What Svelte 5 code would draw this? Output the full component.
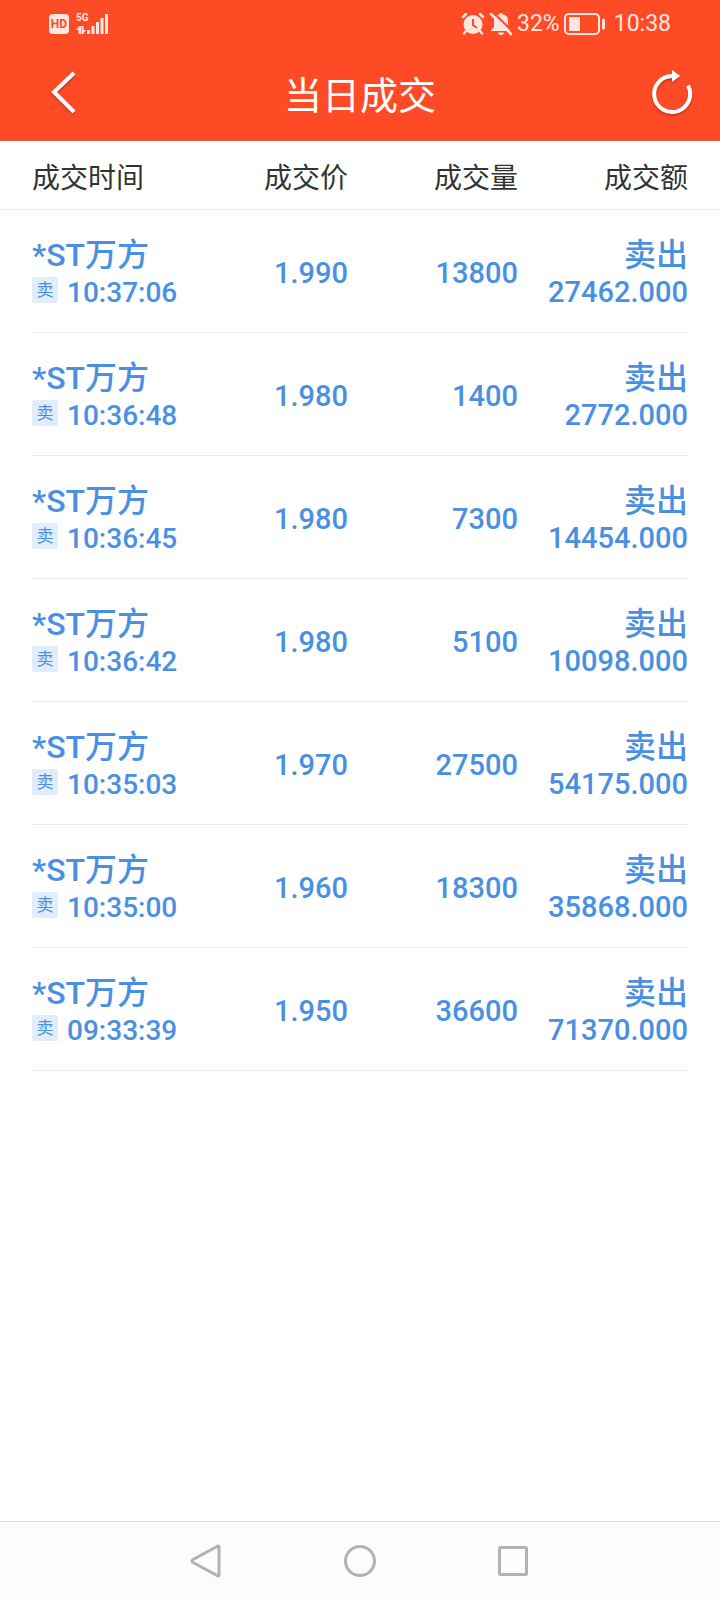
<script>
  const trades = [
    { time: '10:37:06', price: '1.990', volume: '13800', amount: '27462.000' },
    { time: '10:36:48', price: '1.980', volume: '1400', amount: '2772.000' },
    { time: '10:36:45', price: '1.980', volume: '7300', amount: '14454.000' },
    { time: '10:36:42', price: '1.980', volume: '5100', amount: '10098.000' },
    { time: '10:35:03', price: '1.970', volume: '27500', amount: '54175.000' },
    { time: '10:35:00', price: '1.960', volume: '18300', amount: '35868.000' },
    { time: '09:33:39', price: '1.950', volume: '36600', amount: '71370.000' },
  ];
  const columns = ['成交时间', '成交价', '成交量', '成交额'];
</script>

<div class="page">
  <header>
    <div class="status">
      <div class="status-left">
        <span class="hd">HD</span>
        <div class="network">
          <span>5G</span>
          <svg width="34" height="22" viewBox="0 0 34 22" fill="currentColor" aria-hidden="true">
            <path d="M0 17l3.500-4H5v8H2.500v-4zM5.500 13H7.500v4H10l-3 4H5.500z" />
            <rect x="11" y="17" width="3" height="4" />
            <rect x="15.500" y="13" width="3" height="8" />
            <rect x="20" y="9" width="3" height="12" />
            <rect x="24.500" y="5" width="3" height="16" />
            <rect x="29" y="1" width="3" height="20" />
          </svg>
        </div>
      </div>
      <div class="status-right">
        <svg width="24" height="24" viewBox="0 0 24 24" fill="none" stroke="currentColor" aria-hidden="true">
          <circle cx="12" cy="12.500" r="9.500" fill="currentColor" stroke="none" />
          <path d="M2 5l3-3M22 5l-3-3M5 19l-2 2.500M19 19l2 2.500" stroke-width="2.500" stroke-linecap="round" />
          <path d="M12 7v6l4 3" class="cut" stroke-width="2" />
        </svg>
        <svg width="24" height="24" viewBox="0 0 24 24" fill="none" stroke="currentColor" aria-hidden="true">
          <path d="M12 1c-1 0-2 1-2 1.500-4 1-5 3-5 6.500v6l-3 3v1h20v-1l-3-3V9c0-3.500-1-5.500-5-6.500 0-.5-1-1.500-2-1.500zM9 20.500h6c-.5 2-1.500 2.500-3 2.500s-2.500-.5-3-2.500z" fill="currentColor" stroke="none" />
          <path d="M4 0l21 21" class="cut" stroke-width="2" />
          <path d="M2 2l20 20" stroke-width="2.500" stroke-linecap="round" />
        </svg>
        <span>32%</span>
        <svg width="42" height="22" viewBox="0 0 42 22" fill="none" stroke="currentColor" aria-hidden="true">
          <rect x="1" y="1" width="34" height="20" rx="4" stroke-width="2" />
          <rect x="5" y="4" width="11" height="14" rx="1" fill="currentColor" stroke="none" />
          <path d="M39.500 7v8" stroke-width="3" stroke-linecap="round" />
        </svg>
        <span class="clock">10:38</span>
      </div>
    </div>
    <div class="bar">
      <button aria-label="返回">
        <svg width="26" height="44" viewBox="0 0 26 44" fill="none" stroke="currentColor" stroke-width="4" aria-hidden="true">
          <path d="M24 1L4 20l20 20" />
        </svg>
      </button>
      <h1>当日成交</h1>
      <button aria-label="刷新">
        <svg width="42" height="46" viewBox="0 0 42 46" fill="none" stroke="currentColor" stroke-width="4" aria-hidden="true">
          <path d="M38 14.500A18 18 0 1 1 22 5" />
          <path d="M22 -1l8 6-8 6z" fill="currentColor" stroke="none" />
        </svg>
      </button>
    </div>
  </header>

  <main>
    <table>
      <thead>
        <tr>
          {#each columns as column}
            <th scope="col">{column}</th>
          {/each}
        </tr>
      </thead>
      <tbody>
        {#each trades as trade}
          <tr>
            <td class="double">
              <div class="name">*ST万方</div>
              <div class="time"><span class="tag">卖</span><span>{trade.time}</span></div>
            </td>
            <td>{trade.price}</td>
            <td>{trade.volume}</td>
            <td class="double">
              <div class="name">卖出</div>
              <div>{trade.amount}</div>
            </td>
          </tr>
        {/each}
      </tbody>
    </table>
  </main>

  <nav>
    <button aria-label="后退">
      <svg width="32" height="36" viewBox="0 0 32 36" aria-hidden="true">
        <path d="M28 3L3 16.500q-2 1.500 0 3L28 33q1 0 1-1V4q0-1-1-1z" />
      </svg>
    </button>
    <button aria-label="主屏幕">
      <svg width="32" height="36" viewBox="0 0 32 36" aria-hidden="true">
        <circle cx="16" cy="18" r="14.500" />
      </svg>
    </button>
    <button aria-label="最近任务">
      <svg width="32" height="36" viewBox="0 0 32 36" aria-hidden="true">
        <rect x="1.500" y="4.500" width="27" height="27" rx="1" />
      </svg>
    </button>
  </nav>
</div>

<style>
  :global(body) {
    margin: 0;
    background: #fff;
  }
  .page {
    min-height: 100vh;
    display: flex;
    flex-direction: column;
    font-family: Roboto, 'Noto Sans CJK SC', sans-serif;
    color: #333;
  }
  button {
    padding: 0;
    border: 0;
    background: none;
    color: inherit;
    cursor: pointer;
  }
  svg {
    display: block;
    flex: none;
  }
  header {
    background: #ff4a26;
    color: #fff;
    border-bottom: 1px solid #d9583f;
  }
  .status {
    height: 47px;
    padding: 0 49px;
    display: flex;
    align-items: center;
    justify-content: space-between;
    color: #ffe6e0;
    font-size: 23px;
    line-height: 28px;
  }
  .status-left,
  .status-right {
    display: flex;
    align-items: center;
  }
  .status-left {
    gap: 7px;
  }
  .status-right {
    gap: 4px;
  }
  .hd {
    width: 20px;
    border-radius: 4px;
    background: #ffe6e0;
    color: #ff4a26;
    font-size: 12px;
    font-weight: 700;
    line-height: 20px;
    text-align: center;
  }
  .network {
    position: relative;
  }
  .network span {
    position: absolute;
    top: -1px;
    left: 0;
    font-size: 10px;
    font-weight: 700;
    line-height: 12px;
  }
  .cut {
    stroke: #ff4a26;
  }
  .clock {
    margin-left: 4px;
  }
  .bar {
    height: 93px;
    padding: 0 28px 0 50px;
    display: flex;
    align-items: center;
    justify-content: space-between;
  }
  .bar button {
    width: 42px;
  }
  .bar svg {
    overflow: visible;
    filter: drop-shadow(0 2px 1px rgba(120, 30, 10, 0.4));
  }
  h1 {
    margin: 4px 22px 0 0;
    font-size: 38px;
    font-weight: 400;
    line-height: 48px;
  }
  main {
    flex: 1;
  }
  table,
  thead,
  tbody {
    display: block;
  }
  tr {
    display: grid;
    grid-template-columns: 146fr 170fr 170fr 170fr;
    align-items: center;
    box-sizing: border-box;
  }
  thead tr {
    height: 68px;
    padding: 8px 32px 0;
  }
  thead {
    border-bottom: 1px solid #ebebeb;
  }
  th {
    padding: 0;
    font-size: 28px;
    font-weight: 400;
    line-height: 36px;
    text-align: right;
    white-space: nowrap;
  }
  tbody {
    padding: 0 32px;
    color: #4a90e2;
  }
  tbody tr {
    height: 123px;
    padding-top: 4px;
    border-bottom: 1px solid #ebebeb;
  }
  td {
    padding: 0;
    font-size: 29px;
    font-weight: 500;
    line-height: 37px;
    text-align: right;
    white-space: nowrap;
  }
  th:first-child,
  td:first-child {
    text-align: left;
  }
  .double {
    padding-top: 2px;
  }
  .name {
    font-size: 32px;
  }
  .time {
    display: flex;
    align-items: flex-start;
    gap: 9px;
    font-size: 28px;
  }
  .tag {
    width: 26px;
    margin-top: 3px;
    border-radius: 2px;
    background: #e1edfb;
    font-size: 17px;
    font-weight: 400;
    line-height: 26px;
    text-align: center;
  }
  nav {
    height: 78px;
    padding: 0 18%;
    display: grid;
    grid-template-columns: repeat(3, 1fr);
    align-items: center;
    justify-items: center;
    border-top: 1px solid #dcdcdc;
    background: #fcfcfc;
  }
  nav svg {
    fill: none;
    stroke: #b2b2b2;
    stroke-width: 3;
    stroke-linejoin: round;
  }
</style>
